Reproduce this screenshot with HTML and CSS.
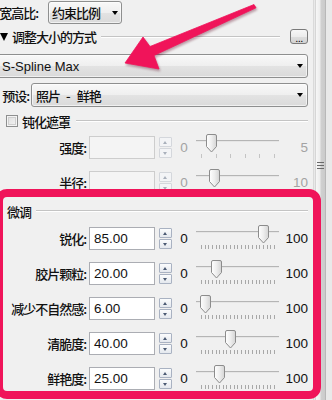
FILE: index.html
```html
<!DOCTYPE html>
<html lang="zh-CN">
<head>
<meta charset="utf-8">
<link rel="stylesheet" href="styles.css">
</head>
<body>
<div class="window">
  <div class="panel">
    <div class="line r1">
      <span class="lbl lbl-ratio"><span>宽高比:</span></span>
      <div class="combo combo-ratio"><span class="ctext">约束比例</span><i class="caret"></i></div>
    </div>

    <div class="ghead gh1">
      <i class="tri"></i><span class="gtext">调整大小的方式</span><span class="rule"></span>
      <span class="dots">...</span>
    </div>

    <div class="combo combo-method"><span class="ctext latin">S-Spline Max</span><i class="caret"></i></div>

    <div class="line r4">
      <span class="lbl lbl-preset"><span>预设:</span></span>
      <div class="combo combo-preset"><span class="ctext">照片<span class="sep">-</span>鲜艳</span><i class="caret"></i></div>
    </div>

    <div class="ghead gh2">
      <i class="check"></i><span class="gtext">钝化遮罩</span><span class="rule"></span>
    </div>

    <div class="param disabled p-first">
      <span class="plabel">强度:</span>
      <span class="field"></span>
      <span class="spin"><i class="sb up"></i><i class="sb down"></i></span>
      <span class="vmin">0</span>
      <span class="slider">
        <i class="track"></i>
        <span class="ticks"><i></i><i></i><i></i><i></i><i></i><i></i></span>
        <svg class="thumb" style="left:10px" width="11" height="19" viewBox="0 0 11 19"><use href="#thumb"/></svg>
      </span>
      <span class="vmax">5</span>
    </div>

    <div class="param disabled">
      <span class="plabel">半径:</span>
      <span class="field"></span>
      <span class="spin"><i class="sb up"></i><i class="sb down"></i></span>
      <span class="vmin">0</span>
      <span class="slider">
        <i class="track"></i>
        <span class="ticks"><i></i><i></i><i></i><i></i><i></i><i></i><i></i><i></i><i></i><i></i><i></i></span>
        <svg class="thumb" style="left:13px" width="11" height="19" viewBox="0 0 11 19"><use href="#thumb"/></svg>
      </span>
      <span class="vmax">10</span>
    </div>

    <div class="ghead gh3">
      <span class="gtext">微调</span><span class="rule"></span>
    </div>

    <div class="param p-first2">
      <span class="plabel">锐化:</span>
      <span class="field">85.00</span>
      <span class="spin"><i class="sb up"></i><i class="sb down"></i></span>
      <span class="vmin">0</span>
      <span class="slider">
        <i class="track"></i>
        <span class="ticks"><i></i><i></i><i></i><i></i><i></i><i></i><i></i><i></i><i></i><i></i><i></i><i></i><i></i><i></i><i></i><i></i><i></i><i></i><i></i><i></i><i></i></span>
        <svg class="thumb" style="left:62px" width="11" height="19" viewBox="0 0 11 19"><use href="#thumb"/></svg>
      </span>
      <span class="vmax">100</span>
    </div>

    <div class="param">
      <span class="plabel">胶片颗粒:</span>
      <span class="field">20.00</span>
      <span class="spin"><i class="sb up"></i><i class="sb down"></i></span>
      <span class="vmin">0</span>
      <span class="slider">
        <i class="track"></i>
        <span class="ticks"><i></i><i></i><i></i><i></i><i></i><i></i><i></i><i></i><i></i><i></i><i></i><i></i><i></i><i></i><i></i><i></i><i></i><i></i><i></i><i></i><i></i></span>
        <svg class="thumb" style="left:15px" width="11" height="19" viewBox="0 0 11 19"><use href="#thumb"/></svg>
      </span>
      <span class="vmax">100</span>
    </div>

    <div class="param">
      <span class="plabel">减少不自然感:</span>
      <span class="field">6.00</span>
      <span class="spin"><i class="sb up"></i><i class="sb down"></i></span>
      <span class="vmin">0</span>
      <span class="slider">
        <i class="track"></i>
        <span class="ticks"><i></i><i></i><i></i><i></i><i></i><i></i><i></i><i></i><i></i><i></i><i></i><i></i><i></i><i></i><i></i><i></i><i></i><i></i><i></i><i></i><i></i></span>
        <svg class="thumb" style="left:4px" width="11" height="19" viewBox="0 0 11 19"><use href="#thumb"/></svg>
      </span>
      <span class="vmax">100</span>
    </div>

    <div class="param">
      <span class="plabel">清脆度:</span>
      <span class="field">40.00</span>
      <span class="spin"><i class="sb up"></i><i class="sb down"></i></span>
      <span class="vmin">0</span>
      <span class="slider">
        <i class="track"></i>
        <span class="ticks"><i></i><i></i><i></i><i></i><i></i><i></i><i></i><i></i><i></i><i></i><i></i><i></i><i></i><i></i><i></i><i></i><i></i><i></i><i></i><i></i><i></i></span>
        <svg class="thumb" style="left:29px" width="11" height="19" viewBox="0 0 11 19"><use href="#thumb"/></svg>
      </span>
      <span class="vmax">100</span>
    </div>

    <div class="param">
      <span class="plabel">鲜艳度:</span>
      <span class="field">25.00</span>
      <span class="spin"><i class="sb up"></i><i class="sb down"></i></span>
      <span class="vmin">0</span>
      <span class="slider">
        <i class="track"></i>
        <span class="ticks"><i></i><i></i><i></i><i></i><i></i><i></i><i></i><i></i><i></i><i></i><i></i><i></i><i></i><i></i><i></i><i></i><i></i><i></i><i></i><i></i><i></i></span>
        <svg class="thumb" style="left:18px" width="11" height="19" viewBox="0 0 11 19"><use href="#thumb"/></svg>
      </span>
      <span class="vmax">100</span>
    </div>
  </div>

  <div class="scrollbar">
    <div class="sthumb"><i class="grip"></i></div>
  </div>

  <div class="highlight"></div>

  <svg class="arrow" width="332" height="400" viewBox="0 0 332 400">
    <polygon points="125,63 143,37 150,46.5 254,4.5 256,7.8 154,55.5 159,69" fill="#f0145a" stroke="#f0145a" stroke-width="0.8" stroke-linejoin="round"/>
  </svg>

  <svg class="defs" width="0" height="0">
    <defs>
      <linearGradient id="tg" x1="0" y1="0" x2="1" y2="0">
        <stop offset="0" stop-color="#ffffff"/>
        <stop offset="0.5" stop-color="#eeeeee"/>
        <stop offset="1" stop-color="#d4d4d4"/>
      </linearGradient>
      <symbol id="thumb" viewBox="0 0 11 19">
        <path d="M2,0.5 H9 A1.5,1.5 0 0 1 10.5,2 V12.5 L5.5,18 L0.5,12.5 V2 A1.5,1.5 0 0 1 2,0.5 Z" fill="url(#tg)" stroke="#8c8c8c" stroke-width="1"/>
      </symbol>
    </defs>
  </svg>
</div>
</body>
</html>
```

FILE: styles.css
```css
* { box-sizing: border-box; }
html, body { margin: 0; padding: 0; }
body {
  background: #f0f0f0;
  font-family: "Noto Sans CJK SC", "Liberation Sans", sans-serif;
  font-size: 13px;
  font-weight: 500;
  color: #111;
}
.window {
  position: relative;
  width: 332px;
  height: 400px;
  overflow: hidden;
  display: flex;
  background: #f0f0f0;
}
.panel {
  width: 313px;
  padding-right: 5px;
  display: flex;
  flex-direction: column;
}
.line {
  display: flex;
  align-items: center;
  height: 23px;
}
.r1 { margin-top: 1px; }
.r4 { margin-top: 5px; height: 24px; }
.lbl {
  display: flex;
  justify-content: flex-end;
  white-space: nowrap;
  letter-spacing: -1px;
}
.lbl-ratio { width: 38px; margin-right: 10px; }
.lbl-preset { width: 29px; margin-right: 2px; }

.combo {
  position: relative;
  display: flex;
  align-items: center;
  height: 24px;
  border: 1px solid #8e8f8f;
  border-radius: 3px;
  background: linear-gradient(#f8f8f8, #efefef 50%, #e3e3e3 51%, #dadada);
  box-shadow: inset 0 0 0 1px rgba(255,255,255,0.6);
}
.combo .ctext { flex: 1; white-space: nowrap; letter-spacing: -1px; }
.combo .ctext.latin { letter-spacing: 0; font-family: "Liberation Sans", sans-serif; font-size: 13px; font-weight: 400; }
.sep { display: inline-block; padding: 0 6px 0 6px; letter-spacing: 0; }
.caret {
  width: 0; height: 0;
  border-left: 3.5px solid transparent;
  border-right: 3.5px solid transparent;
  border-top: 4px solid #000;
}
.combo-ratio { width: 74px; height: 23px; padding: 0 3px 0 3px; }
.combo-method { margin-top: 9px; margin-left: -3px; width: 311px; padding: 0 4px 0 4px; }
.combo-preset { width: 277px; padding: 0 4px 0 4px; }

.ghead {
  display: flex;
  align-items: center;
  height: 16px;
  white-space: nowrap;
}
.gtext { letter-spacing: -1px; }
.rule {
  flex: 1;
  height: 2px;
  border-top: 1px solid #c4c4c4;
  border-bottom: 1px solid #ffffff;
}
.gh1 { margin-top: 4px; height: 17px; }
.gh1 .tri {
  width: 0; height: 0;
  border-left: 4.5px solid transparent;
  border-right: 4.5px solid transparent;
  border-top: 8px solid #000;
  margin-right: 4px;
  margin-top: 1px;
}
.gh1 .rule { margin-left: 5px; margin-right: 10px; }
.dots {
  width: 18px;
  height: 15px;
  border: 1px solid #7a7a7a;
  border-radius: 3px;
  background: linear-gradient(#f6f6f6, #ececec 50%, #dedede 51%, #d2d2d2);
  font-family: "Liberation Sans", sans-serif;
  font-size: 11px;
  font-weight: 400;
  line-height: 16px;
  text-align: center;
  color: #000;
  letter-spacing: -0.5px;
}
.gh2 { margin-top: 6px; }
.check {
  width: 12px;
  height: 12px;
  margin-left: 6px;
  margin-right: 4px;
  border: 1px solid #8e8f8f;
  background: linear-gradient(135deg, #dcdcdc, #f6f6f6);
  box-shadow: inset 0 0 0 1px #f4f4f4, inset 0 0 0 2px #cfcfcf;
}
.gh2 .rule { margin-left: 6px; }
.gh3 { margin-top: 9px; padding-left: 7px; }
.gh3 .rule { margin-left: 5px; }

.param {
  display: grid;
  grid-template-columns: 89px 66px 17px 24px 84px 28px;
  align-items: center;
  height: 23px;
  margin-top: 12px;
}
.p-first { margin-top: 7px; }
.p-first2 { margin-top: 8px; }
.plabel {
  text-align: right;
  padding-right: 3px;
  white-space: nowrap;
  letter-spacing: -1px;
  display: flex;
  justify-content: flex-end;
}
.field {
  height: 23px;
  border: 1px solid #abadb3;
  background: #fff;
  font-family: "Liberation Sans", sans-serif;
  font-size: 13.5px;
  font-weight: 400;
  line-height: 21px;
  padding-left: 4px;
}
.disabled .field { background: #f4f4f4; border-color: #cdcdcd; }
.spin {
  display: flex;
  flex-direction: column;
  gap: 1px;
  padding-left: 4px;
  height: 23px;
  padding-top: 1px;
}
.sb {
  position: relative;
  display: block;
  width: 13px;
  height: 10px;
  border: 1px solid #a9b2c2;
  border-radius: 1px;
  background: linear-gradient(#fbfcfd, #e4e8ee);
}
.sb::after {
  content: "";
  position: absolute;
  left: 3px;
  width: 0; height: 0;
  border-left: 2.5px solid transparent;
  border-right: 2.5px solid transparent;
}
.sb.up::after { top: 3px; border-bottom: 3px solid #4b5a73; }
.sb.down::after { top: 3px; border-top: 3px solid #4b5a73; }
.disabled .sb { border-color: #d4d7dc; background: #f3f4f6; }
.disabled .sb.up::after { border-bottom-color: #a9b0bb; }
.disabled .sb.down::after { border-top-color: #a9b0bb; }

.vmin, .vmax {
  font-family: "Liberation Sans", sans-serif;
  font-size: 13.5px;
  font-weight: 400;
}
.vmin { text-align: center; }
.vmax { text-align: right; }
.disabled .vmin, .disabled .vmax { color: #a3a3a3; }

.slider {
  position: relative;
  height: 23px;
  display: flex;
  flex-direction: column;
}
.track {
  display: block;
  margin-top: 4px;
  width: 83px;
  height: 2px;
  background: #b5b5b5;
  border-bottom: 1px solid #e6e6e6;
}
.ticks {
  display: flex;
  justify-content: space-between;
  margin-top: 12px;
  margin-left: 5px;
  width: 74px;
  height: 4px;
}
.ticks i {
  display: block;
  width: 1px;
  height: 4px;
  background: #a8a8a8;
}
.disabled .ticks i { background: #c4c4c4; }
.thumb {
  position: absolute;
  top: -2px;
}

.scrollbar {
  width: 19px;
  height: 400px;
  border-left: 1px solid #dadada;
  background: #e9e9e9;
  padding-left: 1px;
  padding-right: 6px;
  display: flex;
}
.sthumb {
  flex: 1;
  display: flex;
  flex-direction: column;
  align-items: center;
  background: linear-gradient(to right, #f7f7f7, #ececec 45%, #d0d0d0 55%, #cbcbcb);
  border-left: 1px solid #d6d6d6;
  border-right: 1px solid #b8b8b8;
  padding-top: 162px;
}
.grip {
  display: block;
  width: 7px;
  height: 7px;
  background: repeating-linear-gradient(#6a6a6a 0 1px, transparent 1px 3px);
}

.highlight {
  position: absolute;
  left: -5px;
  top: 189px;
  width: 326px;
  height: 210px;
  border: 8px solid #f0145a;
  border-radius: 12px;
  pointer-events: none;
}
.arrow {
  position: absolute;
  left: 0;
  top: 0;
  pointer-events: none;
  filter: drop-shadow(1px 2px 1px rgba(90, 0, 30, 0.35));
}
.defs { position: absolute; }
```
